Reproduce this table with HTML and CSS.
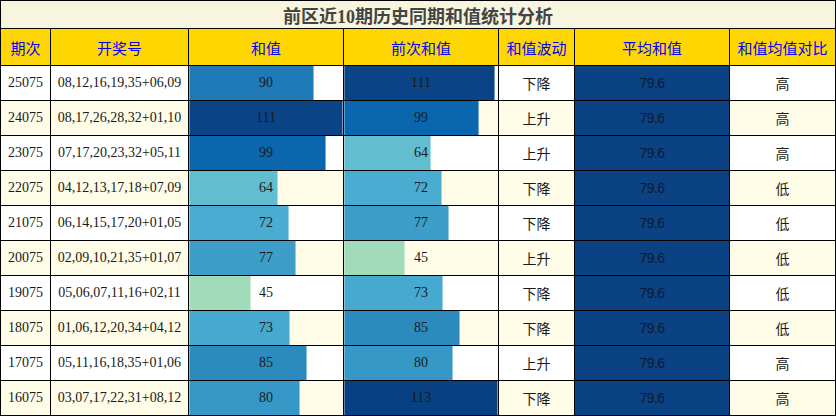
FILE: index.html
```html
<!DOCTYPE html>
<html lang="zh">
<head>
<meta charset="utf-8">
<title>前区近10期历史同期和值统计分析</title>
<link rel="stylesheet" href="styles.css">
</head>
<body>
<div class="sheet">
  <div class="title">前区近10期历史同期和值统计分析</div>

  <div class="hd">期次</div><div class="hd">开奖号</div><div class="hd">和值</div><div class="hd">前次和值</div><div class="hd">和值波动</div><div class="hd">平均和值</div><div class="hd">和值均值对比</div>

  <div class="c">25075</div><div class="c">08,12,16,19,35+06,09</div>
  <div class="c bc"><div class="bar b90" style="width:81.08%"></div><span class="bv">90</span></div>
  <div class="c bc"><div class="bar b111" style="width:98.23%"></div><span class="bv">111</span></div>
  <div class="c">下降</div><div class="c avg">79.6</div><div class="c">高</div>

  <div class="c alt">24075</div><div class="c alt">08,17,26,28,32+01,10</div>
  <div class="c alt bc"><div class="bar b111" style="width:100%"></div><span class="bv">111</span></div>
  <div class="c alt bc"><div class="bar b99" style="width:87.61%"></div><span class="bv">99</span></div>
  <div class="c alt">上升</div><div class="c avg">79.6</div><div class="c alt">高</div>

  <div class="c">23075</div><div class="c">07,17,20,23,32+05,11</div>
  <div class="c bc"><div class="bar b99" style="width:89.19%"></div><span class="bv">99</span></div>
  <div class="c bc"><div class="bar b64" style="width:56.64%"></div><span class="bv">64</span></div>
  <div class="c">上升</div><div class="c avg">79.6</div><div class="c">高</div>

  <div class="c alt">22075</div><div class="c alt">04,12,13,17,18+07,09</div>
  <div class="c alt bc"><div class="bar b64" style="width:57.66%"></div><span class="bv">64</span></div>
  <div class="c alt bc"><div class="bar b72" style="width:63.72%"></div><span class="bv">72</span></div>
  <div class="c alt">下降</div><div class="c avg">79.6</div><div class="c alt">低</div>

  <div class="c">21075</div><div class="c">06,14,15,17,20+01,05</div>
  <div class="c bc"><div class="bar b72" style="width:64.86%"></div><span class="bv">72</span></div>
  <div class="c bc"><div class="bar b77" style="width:68.14%"></div><span class="bv">77</span></div>
  <div class="c">下降</div><div class="c avg">79.6</div><div class="c">低</div>

  <div class="c alt">20075</div><div class="c alt">02,09,10,21,35+01,07</div>
  <div class="c alt bc"><div class="bar b77" style="width:69.37%"></div><span class="bv">77</span></div>
  <div class="c alt bc"><div class="bar b45" style="width:39.82%"></div><span class="bv">45</span></div>
  <div class="c alt">上升</div><div class="c avg">79.6</div><div class="c alt">低</div>

  <div class="c">19075</div><div class="c">05,06,07,11,16+02,11</div>
  <div class="c bc"><div class="bar b45" style="width:40.54%"></div><span class="bv">45</span></div>
  <div class="c bc"><div class="bar b73" style="width:64.60%"></div><span class="bv">73</span></div>
  <div class="c">下降</div><div class="c avg">79.6</div><div class="c">低</div>

  <div class="c alt">18075</div><div class="c alt">01,06,12,20,34+04,12</div>
  <div class="c alt bc"><div class="bar b73" style="width:65.77%"></div><span class="bv">73</span></div>
  <div class="c alt bc"><div class="bar b85" style="width:75.22%"></div><span class="bv">85</span></div>
  <div class="c alt">下降</div><div class="c avg">79.6</div><div class="c alt">低</div>

  <div class="c">17075</div><div class="c">05,11,16,18,35+01,06</div>
  <div class="c bc"><div class="bar b85" style="width:76.58%"></div><span class="bv">85</span></div>
  <div class="c bc"><div class="bar b80" style="width:70.80%"></div><span class="bv">80</span></div>
  <div class="c">上升</div><div class="c avg">79.6</div><div class="c">高</div>

  <div class="c alt">16075</div><div class="c alt">03,07,17,22,31+08,12</div>
  <div class="c alt bc"><div class="bar b80" style="width:72.07%"></div><span class="bv">80</span></div>
  <div class="c alt bc"><div class="bar b113" style="width:100%"></div><span class="bv">113</span></div>
  <div class="c alt">下降</div><div class="c avg">79.6</div><div class="c alt">高</div>
</div>
</body>
</html>
```
FILE: styles.css
```css
* { box-sizing: border-box; }
html, body { margin: 0; padding: 0; background: #ffffff; }
body { font-family: "Liberation Serif", "Noto Sans CJK SC", serif; color: #1a1a1a; }

.sheet {
  display: grid;
  grid-template-columns: 50px 138px 155px 155px 76px 155px 106px;
  grid-template-rows: 28px 37px repeat(10, 35px);
  width: 836px;
  border-top: 1px solid #000;
  border-left: 1px solid #000;
}
.sheet > div {
  border-right: 1px solid #000;
  border-bottom: 1px solid #000;
}

.title {
  grid-column: 1 / -1;
  background: #f7f5dd;
  color: #444444;
  font-weight: bold;
  font-size: 18px;
  display: flex;
  align-items: center;
  justify-content: center;
  padding-top: 1px;
}

.hd {
  background: #ffd700;
  color: #0000ff;
  font-family: "Noto Sans CJK SC", sans-serif;
  font-size: 15px;
  display: flex;
  align-items: center;
  justify-content: center;
}

.c {
  background: #ffffff;
  font-size: 14px;
  display: flex;
  align-items: center;
  justify-content: center;
}
.c.alt { background: #fffce8; }

.bc {
  display: grid;
  grid-template-columns: 100%;
  grid-template-rows: 100%;
  align-items: stretch;
}
.bar {
  grid-area: 1 / 1;
  justify-self: start;
  height: 100%;
  border-left: 1px solid rgba(255,255,255,0.35);
  border-right: 1px solid rgba(255,255,255,0.45);
}
.bv {
  grid-area: 1 / 1;
  justify-self: center;
  align-self: center;
  position: relative;
}

.b45 { background: #a1dbb9; }
.b64 { background: #63bdd0; }
.b72 { background: #49acd0; }
.b73 { background: #46a9cf; }
.b77 { background: #3d9ec9; }
.b80 { background: #3698c6; }
.b85 { background: #2b8bbf; }
.b90 { background: #1f7bb7; }
.b99 { background: #0a67ad; }
.b111 { background: #0a4386; }
.b113 { background: #084183; }

.c.avg {
  background: #0b4283;
  color: #0c1a33;
  font-family: "Liberation Sans", sans-serif;
  font-size: 14px;
  letter-spacing: -0.6px;
}
```
